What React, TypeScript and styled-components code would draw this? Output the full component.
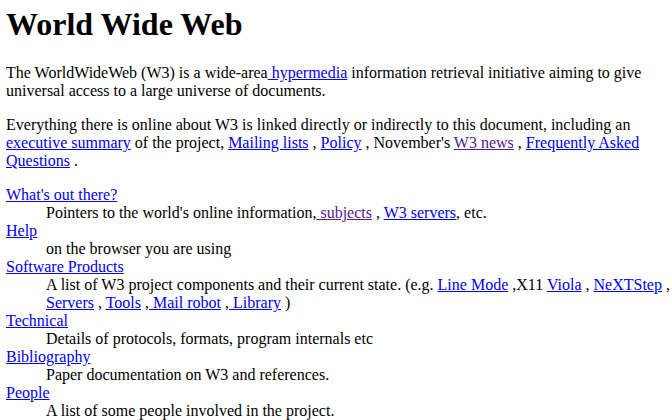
import styled, { createGlobalStyle } from 'styled-components'

const GlobalStyle = createGlobalStyle`
  html, body {
    margin: 0;
    padding: 0;
    background: #ffffff;
  }
  body {
    font-family: "Liberation Serif", "Times New Roman", serif;
    font-size: 16px;
    line-height: 18px;
    color: #000000;
  }
`

type Entry = {
  term: string
  visited?: boolean
  desc: React.ReactNode
}

const Link = ({ children, visited }: { children: React.ReactNode; visited?: boolean }) => (
  <Anchor href="#" $visited={visited} onClick={(e) => e.preventDefault()}>
    {children}
  </Anchor>
)

const entries: Entry[] = [
  {
    term: "What's out there?",
    desc: (
      <>
        Pointers to the world's online information,<Link visited> subjects</Link> ,{' '}
        <Link>W3 servers</Link>, etc.
      </>
    ),
  },
  { term: 'Help', desc: 'on the browser you are using' },
  {
    term: 'Software Products',
    desc: (
      <>
        A list of W3 project components and their current state. (e.g. <Link>Line Mode</Link> ,X11{' '}
        <Link>Viola</Link> , <Link>NeXTStep</Link> , <Link>Servers</Link> , <Link>Tools</Link> ,
        <Link> Mail robot</Link> ,<Link> Library</Link> )
      </>
    ),
  },
  { term: 'Technical', desc: 'Details of protocols, formats, program internals etc' },
  { term: 'Bibliography', desc: 'Paper documentation on W3 and references.' },
  { term: 'People', desc: 'A list of some people involved in the project.' },
]

const App = () => {
  return (
    <Page>
      <GlobalStyle />
      <Title>World Wide Web</Title>
      <Para>
        The WorldWideWeb (W3) is a wide-area<Link> hypermedia</Link> information retrieval
        initiative aiming to give universal access to a large universe of documents.
      </Para>
      <Para>
        Everything there is online about W3 is linked directly or indirectly to this document,
        including an <Link>executive summary</Link> of the project, <Link>Mailing lists</Link> ,{' '}
        <Link>Policy</Link> , November's <Link visited>W3 news</Link> ,{' '}
        <Link>Frequently Asked Questions</Link> .
      </Para>
      <DefList>
        {entries.map((entry) => (
          <div key={entry.term}>
            <Term>
              <Link visited={entry.visited}>{entry.term}</Link>
            </Term>
            <Desc>{entry.desc}</Desc>
          </div>
        ))}
      </DefList>
    </Page>
  )
}

const Page = styled.div`
  padding: 6px 0 6px 6px;
  width: 672px;
  box-sizing: border-box;
`
const Title = styled.h1`
  font-size: 32px;
  font-weight: bold;
  line-height: 37px;
  margin: 0 0 21px;
`
const Para = styled.p`
  margin: 0 0 16px;
`
const Anchor = styled.a<{ $visited?: boolean }>`
  color: ${({ $visited }) => ($visited ? '#551a8b' : '#0000ee')};
  text-decoration: underline;
`
const DefList = styled.dl`
  margin: 0;
`
const Term = styled.dt`
  margin: 0;
`
const Desc = styled.dd`
  margin: 0 0 0 40px;
`

export default App
